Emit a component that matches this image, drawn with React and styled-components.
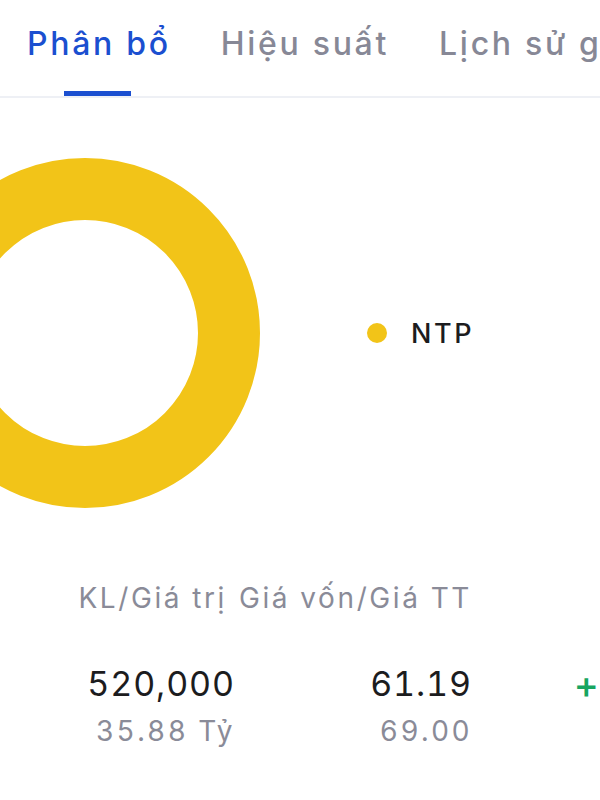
import React from "react";
import styled, { createGlobalStyle } from "styled-components";

const GlobalStyle = createGlobalStyle`
   body {
      margin: 0;
      background: #ffffff;
      font-family: Inter, "Noto Sans", sans-serif;
   }
`

const tabs = ["Phân bổ", "Hiệu suất", "Lịch sử giao dịch"]

export default function App() {
   return (
      <>
         <GlobalStyle />
         <Page>
            <TabBar>
               {tabs.map((t, i) => (
                  <Tab key={t} active={i === 0}>
                     {t}
                     {i === 0 && <Indicator />}
                  </Tab>
               ))}
            </TabBar>

            <ChartRow>
               <Donut width="350" height="350" viewBox="0 0 350 350">
                  <circle cx="175" cy="175" r="144" fill="none" stroke="#f2c418" strokeWidth="62" />
               </Donut>

               <Legend>
                  <Dot color="#f2c418" />
                  <span>NTP</span>
               </Legend>
            </ChartRow>

            <Table>
               <Head align="right" pad="8px">KL/Giá trị</Head>
               <Head align="right">Giá vốn/Giá TT</Head>
               <Head />

               <Main>520,000</Main>
               <Main>61.19</Main>
               <Change>+</Change>

               <Sub>35.88 Tỷ</Sub>
               <Sub>69.00</Sub>
               <Sub />
            </Table>
         </Page>
      </>
   )
}

const Page = styled.div`
   width: 600px;
   height: 800px;
   overflow: hidden;
`

const TabBar = styled.div`
   display: flex;
   gap: 50px;
   height: 96px;
   padding-left: 27px;
   border-bottom: 2px solid #eef0f5;
   white-space: nowrap;
   overflow: hidden;
`

const Tab = styled.div`
   position: relative;
   padding-top: 24px;
   font-size: 32px;
   font-weight: 500;
   letter-spacing: 2.7px;
   color: ${props => props.active ? "#1b4fd0" : "#878896"};
`

const Indicator = styled.div`
   position: absolute;
   left: 50%;
   bottom: 0;
   width: 67px;
   height: 5px;
   margin-left: -35px;
   background: #1b4fd0;
`

const ChartRow = styled.div`
   display: flex;
   align-items: center;
   padding-top: 60px;
   height: 350px;
`

const Donut = styled.svg`
   flex-shrink: 0;
   margin-left: -90px;
`

const Legend = styled.div`
   display: flex;
   align-items: center;
   gap: 24px;
   margin-left: 107px;
   font-size: 27px;
   font-weight: 500;
   letter-spacing: 2.6px;
   color: #1c1c1e;
`

const Dot = styled.span`
   width: 20px;
   height: 20px;
   border-radius: 50%;
   background: ${props => props.color};
`

const Table = styled.div`
   display: grid;
   grid-template-columns: 235px 237px 128px;
   margin-top: 73px;
   white-space: nowrap;
   font-feature-settings: "tnum";
`

const Head = styled.div`
   text-align: ${props => props.align || "left"};
   padding-right: ${props => props.pad || "0"};
   font-size: 28px;
   letter-spacing: 2.6px;
   color: #8a8b98;
   margin-bottom: 48px;
`

const Main = styled.div`
   text-align: right;
   font-size: 34px;
   letter-spacing: 0.9px;
   color: #1c1c1e;
`

const Change = styled.div`
   padding-left: 102px;
   font-size: 38px;
   line-height: 42px;
   font-weight: 500;
   color: #17a560;
`

const Sub = styled.div`
   text-align: right;
   margin-top: 9px;
   font-size: 28px;
   letter-spacing: 2.4px;
   color: #8a8b98;
`
